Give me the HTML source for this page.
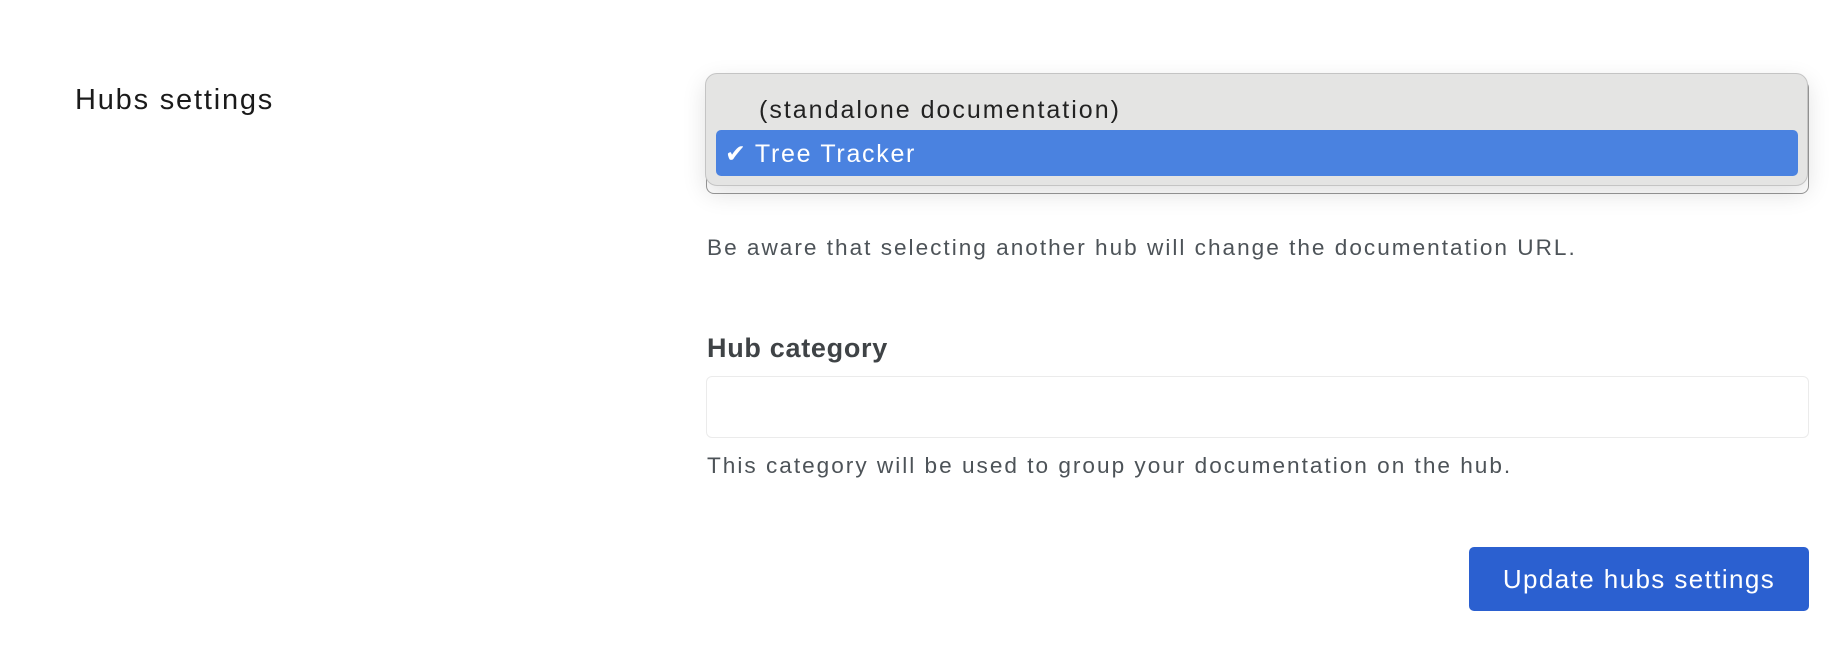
<!DOCTYPE html>
<html><head><meta charset="utf-8"><style>
html,body{margin:0;padding:0;background:#fff;width:1842px;height:646px;overflow:hidden;font-family:"Liberation Sans",sans-serif;}
.abs{position:absolute;white-space:nowrap;}
</style></head><body>
<div class="abs" style="left:75px;top:82px;font-size:29px;color:#1a1a1a;line-height:36px;letter-spacing:1.8px;">Hubs settings</div>

<div class="abs" style="left:706px;top:80px;width:1101px;height:112px;border:1px solid #9a9a9a;border-top-color:#ccc;border-radius:8px;background:#fff;"></div>
<div class="abs" style="left:705px;top:73px;width:1101px;height:111px;border:1px solid #c4c4c4;border-radius:12px;background:#e4e4e3;box-shadow:0 8px 24px rgba(0,0,0,0.12);"></div>
<div class="abs" style="left:759px;top:95px;font-size:25px;line-height:30px;color:#222;letter-spacing:2px;">(standalone documentation)</div>
<div class="abs" style="left:716px;top:130px;width:1082px;height:46px;border-radius:5px;background:#4a82e0;"></div>
<div class="abs" style="left:725px;top:139px;font-size:25px;line-height:30px;color:#fff;">✔ <span style="letter-spacing:1.7px;margin-left:2px;">Tree Tracker</span></div>

<div class="abs" style="left:707px;top:234px;font-size:22.6px;line-height:28px;color:#4d5358;letter-spacing:2px;">Be aware that selecting another hub will change the documentation URL.</div>

<div class="abs" style="left:707px;top:332px;font-size:27px;line-height:32px;color:#3f4346;font-weight:bold;letter-spacing:0.7px;">Hub category</div>
<div class="abs" style="left:706px;top:376px;width:1101px;height:60px;border:1px solid #ebebeb;border-radius:6px;background:#fff;"></div>
<div class="abs" style="left:707px;top:452px;font-size:22.6px;line-height:28px;color:#4d5358;letter-spacing:2px;">This category will be used to group your documentation on the hub.</div>

<div class="abs" style="left:1469px;top:547px;width:340px;height:64px;border-radius:5px;background:#2b60d0;color:#fff;font-size:26px;line-height:64px;text-align:center;letter-spacing:1.4px;">Update hubs settings</div>
</body></html>
